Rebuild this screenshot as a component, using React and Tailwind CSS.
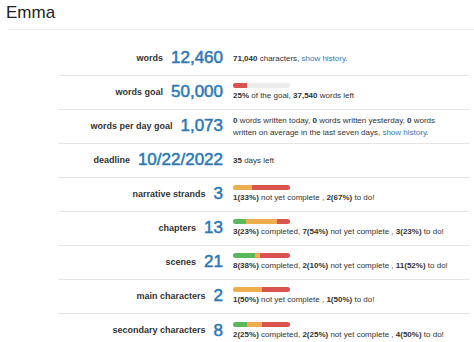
import React from "react";

const G = "#5cb85c";
const O = "#f0ad4e";
const R = "#d9534f";

function Bar({ segs }) {
  return (
    <div className="flex h-[5px] w-[57px] overflow-hidden rounded-full bg-[#ebebeb] mb-[2px]">
      {segs.map(([c, w], i) => (
        <div key={i} style={{ width: w + "%", backgroundColor: c }} />
      ))}
    </div>
  );
}

function Row({ label, value, children, last }) {
  return (
    <div className={"flex h-[34px] items-center " + (last ? "" : "border-b border-[#e6e6e6]")}>
      <div className="flex w-[165px] items-center justify-end gap-[8px]">
        <span className="text-[9px] font-bold text-[#333]">{label}</span>
        <span className="-mt-[2px] text-[17px] leading-none text-[#2b78b5] [-webkit-text-stroke:0.5px_#2b78b5]">{value}</span>
      </div>
      <div className="ml-[10px] w-[225px] text-[8px] leading-[12px] text-[#333]">{children}</div>
    </div>
  );
}

export default function App() {
  return (
    <div className="h-[342px] w-[474px] overflow-hidden bg-white" style={{ fontFamily: '"Liberation Sans", Arial, sans-serif' }}>
      <div className="pl-[6px] pt-[2px] text-[17px] leading-[22px] text-[#222]">Emma</div>
      <div className="ml-2 mt-[5px] border-b border-[#eeeeee]" />
      <div className="ml-[58px] mt-3 w-[412px]">
        <Row label="words" value="12,460">
          <b>71,040</b> characters, <span className="text-[#337ab7]">show history</span>.
        </Row>
        <Row label="words goal" value="50,000">
          <Bar segs={[[R, 25]]} />
          <div><b>25%</b> of the goal, <b>37,540</b> words left</div>
        </Row>
        <Row label="words per day goal" value="1,073">
          <b>0</b> words written today, <b>0</b> words written yesterday, <b>0</b> words written on average in the last seven days, <span className="text-[#337ab7]">show history</span>.
        </Row>
        <Row label="deadline" value="10/22/2022">
          <b>35</b> days left
        </Row>
        <Row label="narrative strands" value="3">
          <Bar segs={[[O, 33], [R, 67]]} />
          <div><b>1(33%)</b> not yet complete , <b>2(67%)</b> to do!</div>
        </Row>
        <Row label="chapters" value="13">
          <Bar segs={[[G, 23], [O, 54], [R, 23]]} />
          <div><b>3(23%)</b> completed, <b>7(54%)</b> not yet complete , <b>3(23%)</b> to do!</div>
        </Row>
        <Row label="scenes" value="21">
          <Bar segs={[[G, 38], [O, 10], [R, 52]]} />
          <div><b>8(38%)</b> completed, <b>2(10%)</b> not yet complete , <b>11(52%)</b> to do!</div>
        </Row>
        <Row label="main characters" value="2">
          <Bar segs={[[O, 50], [R, 50]]} />
          <div><b>1(50%)</b> not yet complete , <b>1(50%)</b> to do!</div>
        </Row>
        <Row label="secondary characters" value="8" last>
          <Bar segs={[[G, 25], [O, 25], [R, 50]]} />
          <div><b>2(25%)</b> completed, <b>2(25%)</b> not yet complete , <b>4(50%)</b> to do!</div>
        </Row>
      </div>
    </div>
  );
}
